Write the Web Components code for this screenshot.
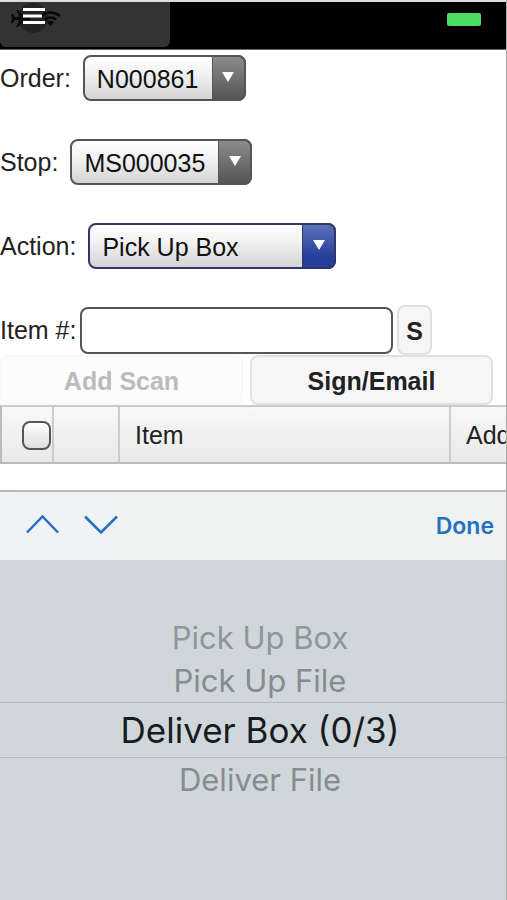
<!DOCTYPE html>
<html lang="en">
<head>
<meta charset="utf-8">
<meta name="viewport" content="width=device-width, initial-scale=1">
<title>Scan items</title>
<style>
  body {
    margin: 0;
    font-family: "Liberation Sans", Arial, sans-serif;
    font-size: 25px;
    color: #222;
    background: #fff;
  }
</style>
</head>
<body>
<scan-app>
  <status-header slot="header"></status-header>
  <select-field label="Order:" options="N000861"></select-field>
  <select-field label="Stop:" options="MS000035"></select-field>
  <select-field label="Action:" options="Pick Up Box|Pick Up File|Deliver Box (0/3)|Deliver File" active></select-field>
  <item-field label="Item #:"></item-field>
  <action-bar slot="actions">
    <action-button disabled>Add Scan</action-button>
    <action-button>Sign/Email</action-button>
  </action-bar>
  <item-table slot="table"></item-table>
  <picker-toolbar slot="picker">Done</picker-toolbar>
  <wheel-picker slot="picker" options="Pick Up Box|Pick Up File|Deliver Box (0/3)|Deliver File" selected="2"></wheel-picker>
</scan-app>

<script>
class ScanApp extends HTMLElement {
  constructor() {
    super();
    this._root = this.attachShadow({ mode: 'open' });
    this._root.innerHTML = `
      <style>
        :host {
          display: flex;
          flex-direction: column;
          box-sizing: border-box;
          min-height: 100vh;
          border-right: 1px solid #aaa;
          overflow: hidden;
        }
        form {
          display: flex;
          flex-direction: column;
          gap: 38px;
          padding-top: 5px;
        }
        .picker {
          display: flex;
          flex-direction: column;
          flex: 1;
          margin-top: 26px;
        }
      </style>
      <slot name="header"></slot>
      <form><slot></slot></form>
      <slot name="actions"></slot>
      <slot name="table"></slot>
      <div class="picker"><slot name="picker"></slot></div>
    `;
  }
}

class StatusHeader extends HTMLElement {
  constructor() {
    super();
    this._root = this.attachShadow({ mode: 'open' });
    this._root.innerHTML = `
      <style>
        :host {
          display: flex;
          justify-content: space-between;
          box-sizing: border-box;
          height: 50px;
          background: #000;
          border-top: 2px solid #ddd;
          border-bottom: 1px solid #666;
          padding-right: 25px;
        }
        button {
          width: 170px;
          height: 45px;
          padding: 0;
          border: 0;
          border-radius: 0 0 6px 6px;
          background: #333;
          text-align: left;
        }
        svg { display: block; height: 45px; }
        .battery {
          width: 34px;
          height: 13px;
          margin-top: 11px;
          border-radius: 2px;
          background: #4bdc62;
        }
      </style>
      <button aria-label="Menu">
        <svg width="70" height="45" viewBox="0 2 70 45">
          <circle cx="33" cy="18" r="15" fill="#232323"/>
          <path d="M11 14h2l2 3h5l-4-7h2l6 7h6q2 1.500 0 3h-6l-6 7h-2l4-7h-5l-2 3h-2l1-4.500z" fill="#080808"/>
          <g fill="none" stroke="#080808" stroke-width="2.500">
            <path d="M41 16q9.500-7 19 0"/>
            <path d="M45 19.500q5.500-4 11 0"/>
          </g>
          <path d="M47 22q3.500-2.500 7 0l-3.500 4z" fill="#080808"/>
          <path d="M23 9.500h22M23 16h19M23 22.500h22" stroke="#fff" stroke-width="3"/>
        </svg>
      </button>
      <span class="battery"></span>
    `;
  }
}

class SelectField extends HTMLElement {
  constructor() {
    super();
    const label = this.getAttribute('label');
    const options = this.getAttribute('options').split('|');
    this._root = this.attachShadow({ mode: 'open' });
    this._root.innerHTML = `
      <style>
        :host {
          display: flex;
          align-items: center;
          gap: 12px;
          --edge: #555;
          --arrow: linear-gradient(#8b8b8b, #555);
        }
        :host([active]) {
          --edge: #343466;
          --arrow: linear-gradient(#5b72b9, #263f9b 75%);
        }
        .control {
          display: grid;
          grid-template-columns: 1fr 34px;
        }
        select {
          grid-area: 1 / 1 / 2 / 3;
          appearance: none;
          box-sizing: border-box;
          height: 46px;
          margin: 0;
          padding: 2px 45px 0 12px;
          border: 2px solid var(--edge);
          border-radius: 8px;
          font: inherit;
          color: #111;
          background: linear-gradient(#fff, #f2f2f2 40%, #d4d4d4);
        }
        .arrow {
          grid-area: 1 / 2;
          display: flex;
          align-items: center;
          justify-content: center;
          box-sizing: border-box;
          border: 2px solid var(--edge);
          border-left-width: 1px;
          border-radius: 0 8px 8px 0;
          background: var(--arrow);
          pointer-events: none;
        }
      </style>
      <label for="field">${label}</label>
      <div class="control">
        <select id="field">${options.map((o) => `<option>${o}</option>`).join('')}</select>
        <span class="arrow">
          <svg width="12" height="12" viewBox="0 0 12 12"><path d="M0 0h12L6 10z" fill="#fff"/></svg>
        </span>
      </div>
    `;
  }
}

class ItemField extends HTMLElement {
  constructor() {
    super();
    this._root = this.attachShadow({ mode: 'open' });
    this._root.innerHTML = `
      <style>
        :host {
          display: flex;
          align-items: center;
          gap: 4px;
          margin-top: -2px;
          padding-right: 74px;
        }
        input {
          flex: 1;
          min-width: 0;
          box-sizing: border-box;
          height: 47px;
          padding: 0 12px;
          border: 2px solid #555;
          border-radius: 8px;
          font: inherit;
          background: #fff;
        }
        action-button { flex: none; width: 35px; }
      </style>
      <label for="item">${this.getAttribute('label')}</label>
      <input id="item" type="text">
      <action-button>S</action-button>
    `;
  }
}

class ActionBar extends HTMLElement {
  constructor() {
    super();
    this._root = this.attachShadow({ mode: 'open' });
    this._root.innerHTML = `
      <style>
        :host {
          display: flex;
          gap: 7px;
          padding-right: 13px;
        }
        ::slotted(*) { flex: 1; }
      </style>
      <slot></slot>
    `;
  }
}

class ActionButton extends HTMLElement {
  constructor() {
    super();
    this._root = this.attachShadow({ mode: 'open' });
    this._root.innerHTML = `
      <style>
        :host { display: block; }
        button {
          display: block;
          box-sizing: border-box;
          width: 100%;
          height: 50px;
          padding: 2px 0 0;
          border: 2px solid #e0e0e0;
          border-radius: 8px;
          font: inherit;
          font-weight: bold;
          color: #222;
          background: #f6f6f6;
        }
        button:disabled {
          color: #bbb;
          background: #fcfcfc;
          border-color: #f8f8f8;
        }
      </style>
      <button type="button"${this.hasAttribute('disabled') ? ' disabled' : ''}><slot></slot></button>
    `;
  }
}

class ItemTable extends HTMLElement {
  constructor() {
    super();
    this._root = this.attachShadow({ mode: 'open' });
    this._root.innerHTML = `
      <style>
        :host { display: block; overflow: hidden; }
        table {
          width: 100%;
          table-layout: fixed;
          border-collapse: separate;
          border-spacing: 0;
          background: linear-gradient(#f8f8f8, #e9e9e8);
          border-top: 2px solid #ccc;
          border-bottom: 2px solid #bbb;
          border-left: 2px solid #bbb;
        }
        th {
          box-sizing: border-box;
          height: 55px;
          padding: 2px 0 0 15px;
          border-right: 2px solid #ccc;
          font-weight: normal;
          text-align: left;
          white-space: nowrap;
          overflow: hidden;
        }
        th:last-child { border-right: 0; }
        .check { width: 52px; padding-left: 20px; }
        .icon { width: 66px; }
        .added { width: 55px; }
        input {
          display: block;
          appearance: none;
          box-sizing: border-box;
          width: 29px;
          height: 29px;
          margin: 0;
          border: 2px solid #555;
          border-radius: 8px;
          background: linear-gradient(#fff, #ddd);
        }
      </style>
      <table>
        <thead>
          <tr>
            <th class="check"><input type="checkbox" aria-label="Select all"></th>
            <th class="icon"></th>
            <th>Item</th>
            <th class="added">Add</th>
          </tr>
        </thead>
      </table>
    `;
  }
}

class PickerToolbar extends HTMLElement {
  constructor() {
    super();
    this._root = this.attachShadow({ mode: 'open' });
    this._root.innerHTML = `
      <style>
        :host {
          display: flex;
          align-items: center;
          gap: 24px;
          box-sizing: border-box;
          height: 70px;
          padding: 0 12px 0 26px;
          border-top: 2px solid #b8b8b8;
          background: linear-gradient(90deg, #f0f2f5, #eff2f0 45%);
        }
        button {
          padding: 0;
          border: 0;
          background: none;
          color: #2470c2;
          font: 600 23px Inter, sans-serif;
        }
        svg { display: block; fill: none; stroke: currentColor; stroke-width: 2.500; }
        .done { margin-left: auto; }
      </style>
      <button aria-label="Previous"><svg width="34" height="22" viewBox="0 1 34 22"><path d="M1 18.500L16.500 2.500L32 18.500"/></svg></button>
      <button aria-label="Next"><svg width="34" height="22" viewBox="0 1 34 22"><path d="M1 2.500L17 18.500L33 2.500"/></svg></button>
      <button class="done"><slot></slot></button>
    `;
  }
}

class WheelPicker extends HTMLElement {
  constructor() {
    super();
    const selected = Number(this.getAttribute('selected'));
    const options = this.getAttribute('options').split('|');
    this._root = this.attachShadow({ mode: 'open' });
    this._root.innerHTML = `
      <style>
        :host {
          display: block;
          flex: 1;
          background: #d0d7db;
          font-family: Inter, sans-serif;
          text-align: center;
        }
        ul { margin: 0; padding: 56px 0 0; list-style: none; }
        li {
          padding-left: 14px;
          font-size: 31px;
          line-height: 43px;
          color: #868c90;
        }
        .far { color: #90969a; }
        [aria-selected="true"] {
          font-size: 35px;
          line-height: 54px;
          color: #171b20;
          border-top: 1px solid #b7bcc3;
          border-bottom: 1px solid #b7bcc3;
        }
      </style>
      <ul role="listbox" aria-label="Action">
        ${options.map((o, i) => `<li role="option" class="${Math.abs(i - selected) > 1 ? 'far' : ''}" aria-selected="${i === selected}">${o}</li>`).join('')}
      </ul>
    `;
  }
}

window.customElements.define('scan-app', ScanApp);
window.customElements.define('status-header', StatusHeader);
window.customElements.define('select-field', SelectField);
window.customElements.define('item-field', ItemField);
window.customElements.define('action-bar', ActionBar);
window.customElements.define('action-button', ActionButton);
window.customElements.define('item-table', ItemTable);
window.customElements.define('picker-toolbar', PickerToolbar);
window.customElements.define('wheel-picker', WheelPicker);
</script>
</body>
</html>
